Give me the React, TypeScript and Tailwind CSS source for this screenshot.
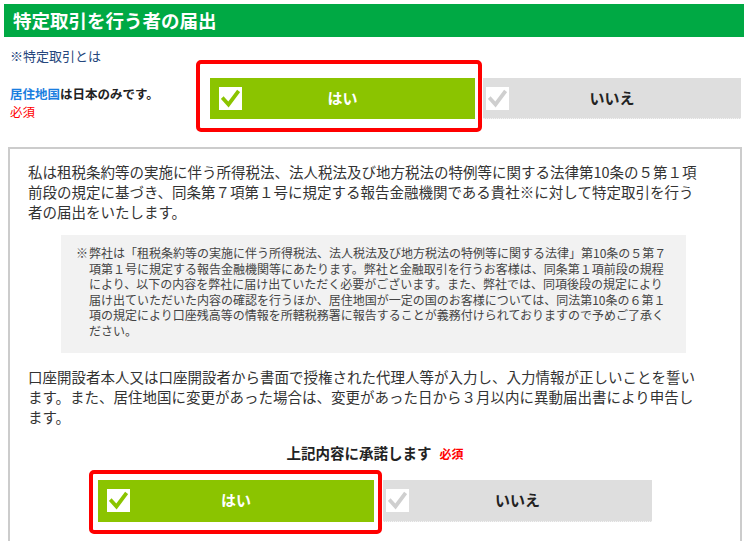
import React from 'react';

function CheckBox({ active }: { active: boolean }) {
  return (
    <span className="flex items-center justify-center w-[23px] h-[23px] bg-white shrink-0">
      <svg width="19" height="19" viewBox="0 0 19 19">
        <path
          d="M2.5 10 L7.5 15.5 L16.5 3.5"
          fill="none"
          stroke={active ? '#8bc400' : '#cfcfcf'}
          strokeWidth="3.8"
          strokeLinecap="square"
          strokeLinejoin="miter"
        />
      </svg>
    </span>
  );
}

function YesButton({ width, height, ring }: { width: string; height: string; ring: string }) {
  return (
    <div className={`relative flex items-center ${width} ${height} bg-[#8bc400] pl-[9px]`}>
      <CheckBox active />
      <span className="flex-1 text-center pr-[32px] text-white font-bold text-[15px]">はい</span>
      <div className={`absolute ${ring} border-4 border-[#ff0000] rounded-[5px] pointer-events-none`} />
    </div>
  );
}

function NoButton({ width, height }: { width: string; height: string }) {
  return (
    <div className={`flex items-center ${width} ${height} bg-[#dedede] border-b border-dotted border-[#f4f4f4] pl-[3px]`}>
      <CheckBox active={false} />
      <span className="flex-1 text-center pr-[26px] text-[#222] font-bold text-[15px]">いいえ</span>
    </div>
  );
}

export default function App() {
  return (
    <div className="w-[750px] h-[541px] overflow-hidden bg-white font-['Noto_Sans_CJK_JP',sans-serif] text-[#333]">
      <div className="mt-[4px] ml-[4px] mr-[6px] h-[33px] bg-[#00a944] pl-[9px] flex items-center text-white font-bold text-[18.5px]">
        特定取引を行う者の届出
      </div>

      <div className="px-[10px] mt-[11px] text-[13px] leading-[16px] text-[#25477d]">※特定取引とは</div>

      <div className="flex mt-[14px]">
        <div className="w-[210px] pl-[10px] pt-[7px] text-[12.5px] leading-[18px]">
          <div className="font-bold text-[#222]">
            <span className="text-[#1a7ee0]">居住地国</span>は日本のみです。
          </div>
          <div className="text-[#ff0000]">必須</div>
        </div>
        <div className="flex gap-[8px]">
          <YesButton width="w-[265px]" height="h-[41px]" ring="-left-[14px] -right-[7px] -top-[18px] -bottom-[13px]" />
          <NoButton width="w-[258px]" height="h-[41px]" />
        </div>
      </div>

      <div className="mt-[26px] ml-[8px] w-[734px] h-[400px] border-2 border-b-0 border-[#cccccc] px-[18px] pt-[13px]">
        <p className="text-[14.5px] leading-[20px]">
          私は租税条約等の実施に伴う所得税法、法人税法及び地方税法の特例等に関する法律第10条の５第１項
          <br />
          前段の規定に基づき、同条第７項第１号に規定する報告金融機関である貴社※に対して特定取引を行う
          <br />
          者の届出をいたします。
        </p>

        <div className="mt-[13px] ml-[33px] mr-[36px] bg-[#f2f2f2] pt-[10px] pb-[14px] pl-[15px] pr-[12px] flex text-[12px] leading-[15.6px] text-[#444]">
          <span className="w-[13px] shrink-0">※</span>
          <p>
            弊社は「租税条約等の実施に伴う所得税法、法人税法及び地方税法の特例等に関する法律」第10条の５第７
            <br />
            項第１号に規定する報告金融機関等にあたります。弊社と金融取引を行うお客様は、同条第１項前段の規程
            <br />
            により、以下の内容を弊社に届け出ていただく必要がございます。また、弊社では、同項後段の規定により
            <br />
            届け出ていただいた内容の確認を行うほか、居住地国が一定の国のお客様については、同法第10条の６第１
            <br />
            項の規定により口座残高等の情報を所轄税務署に報告することが義務付けられておりますので予めご了承く
            <br />
            ださい。
          </p>
        </div>

        <p className="mt-[14px] text-[14.5px] leading-[20px]">
          口座開設者本人又は口座開設者から書面で授権された代理人等が入力し、入力情報が正しいことを誓い
          <br />
          ます。また、居住地国に変更があった場合は、変更があった日から３月以内に異動届出書により申告し
          <br />
          ます。
        </p>

        <div className="mt-[16px] text-center font-bold text-[14.5px] leading-[20px] text-[#222]">
          上記内容に承諾します
          <span className="ml-[8px] text-[12px] text-[#ff0000]">必須</span>
        </div>

        <div className="mt-[16px] flex justify-center gap-[9px]">
          <YesButton width="w-[276px]" height="h-[42px]" ring="-left-[9px] -right-[8px] -top-[10px] -bottom-[12px]" />
          <NoButton width="w-[269px]" height="h-[42px]" />
        </div>
      </div>
    </div>
  );
}
